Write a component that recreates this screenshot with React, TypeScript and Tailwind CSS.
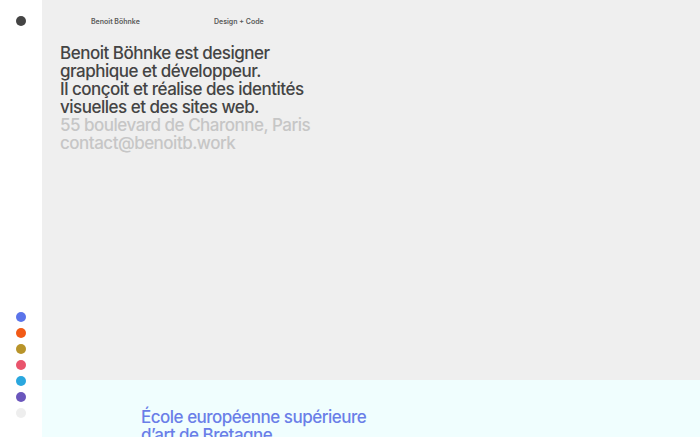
const DOTS = [
  "bg-[#5b74ea]",
  "bg-[#f25a16]",
  "bg-[#b8942a]",
  "bg-[#e9546c]",
  "bg-[#2aa7de]",
  "bg-[#6a56bc]",
  "bg-[#eeeeee]",
];

function Sidebar() {
  return (
    <aside className="flex h-[437px] w-[42px] shrink-0 flex-col items-center justify-between bg-white pb-[19px] pt-[16px]">
      <span className="h-[10px] w-[10px] rounded-full bg-[#444]" />
      <div className="flex flex-col gap-[6px]">
        {DOTS.map((c) => (
          <span key={c} className={`block h-[10px] w-[10px] rounded-full ${c}`} />
        ))}
      </div>
    </aside>
  );
}

export default function App() {
  return (
    <div className="flex h-[437px] w-full overflow-hidden font-['Inter',sans-serif]">
      <Sidebar />
      <main className="flex min-w-0 flex-1 flex-col">
        <section className="h-[380px] shrink-0 bg-[#efefef] px-[18px] pt-[17px]">
          <nav className="flex h-[10px] items-center text-[7px] font-semibold text-[#5a5a5a]">
            <span className="ml-[31px] w-[123px]">Benoit Böhnke</span>
            <span>Design + Code</span>
          </nav>
          <div className="mt-[17px] text-[17px] font-medium leading-[18px] tracking-[-0.5px] text-[#444]">
            <p>Benoit Böhnke est designer</p>
            <p>graphique et développeur.</p>
            <p>Il conçoit et réalise des identités</p>
            <p>visuelles et des sites web.</p>
            <p className="text-[#c6c6c6]">55 boulevard de Charonne, Paris</p>
            <p className="text-[#c6c6c6]">contact@benoitb.work</p>
          </div>
        </section>
        <section className="flex-1 bg-[#f0fefe] pl-[99px] pt-[28px]">
          <p className="text-[17px] font-medium leading-[18px] tracking-[-0.5px] text-[#6a7ee8]">
            École européenne supérieure
            <br />
            d’art de Bretagne
          </p>
        </section>
      </main>
    </div>
  );
}
